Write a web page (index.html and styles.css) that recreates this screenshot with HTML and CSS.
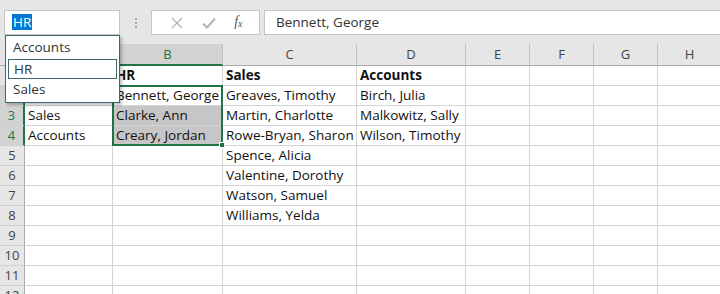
FILE: index.html
```html
<!DOCTYPE html>
<html>
<head>
<meta charset="utf-8">
<link rel="stylesheet" href="styles.css">
</head>
<body>
<div class="app">
  <div class="toolbar">
    <div class="namebox"><span class="namesel">HR</span></div>
    <div class="grip"><i></i><i></i><i></i></div>
    <div class="fxbox">
      <svg class="ico" width="14" height="14" viewBox="0 0 14 14"><path d="M2 2 L12 12 M12 2 L2 12" stroke="#b4b4b4" stroke-width="1.4" fill="none"/></svg>
      <svg class="ico" width="16" height="14" viewBox="0 0 16 14"><path d="M2 7.5 L6 11.5 L14 2.5" stroke="#b4b4b4" stroke-width="2" fill="none"/></svg>
      <span class="fx">f<sub>x</sub></span>
    </div>
    <div class="formula">Bennett, George</div>
  </div>

  <div class="sheet">
    <div class="corner"></div>
    <div class="ch">A</div><div class="ch sel">B</div><div class="ch">C</div><div class="ch">D</div><div class="ch">E</div><div class="ch">F</div><div class="ch">G</div><div class="ch">H</div>

    <div class="rh">1</div><div class="c"></div><div class="c b">HR</div><div class="c b">Sales</div><div class="c b">Accounts</div><div class="c"></div><div class="c"></div><div class="c"></div><div class="c"></div>
    <div class="rh sel">2</div><div class="c"></div><div class="c active">Bennett, George<div class="selection"><span class="handle"></span></div></div><div class="c">Greaves, Timothy</div><div class="c">Birch, Julia</div><div class="c"></div><div class="c"></div><div class="c"></div><div class="c"></div>
    <div class="rh sel">3</div><div class="c">Sales</div><div class="c hl">Clarke, Ann</div><div class="c">Martin, Charlotte</div><div class="c">Malkowitz, Sally</div><div class="c"></div><div class="c"></div><div class="c"></div><div class="c"></div>
    <div class="rh sel">4</div><div class="c">Accounts</div><div class="c hl">Creary, Jordan</div><div class="c">Rowe-Bryan, Sharon</div><div class="c">Wilson, Timothy</div><div class="c"></div><div class="c"></div><div class="c"></div><div class="c"></div>
    <div class="rh">5</div><div class="c"></div><div class="c"></div><div class="c">Spence, Alicia</div><div class="c"></div><div class="c"></div><div class="c"></div><div class="c"></div><div class="c"></div>
    <div class="rh">6</div><div class="c"></div><div class="c"></div><div class="c">Valentine, Dorothy</div><div class="c"></div><div class="c"></div><div class="c"></div><div class="c"></div><div class="c"></div>
    <div class="rh">7</div><div class="c"></div><div class="c"></div><div class="c">Watson, Samuel</div><div class="c"></div><div class="c"></div><div class="c"></div><div class="c"></div><div class="c"></div>
    <div class="rh">8</div><div class="c"></div><div class="c"></div><div class="c">Williams, Yelda</div><div class="c"></div><div class="c"></div><div class="c"></div><div class="c"></div><div class="c"></div>
    <div class="rh">9</div><div class="c"></div><div class="c"></div><div class="c"></div><div class="c"></div><div class="c"></div><div class="c"></div><div class="c"></div><div class="c"></div>
    <div class="rh">10</div><div class="c"></div><div class="c"></div><div class="c"></div><div class="c"></div><div class="c"></div><div class="c"></div><div class="c"></div><div class="c"></div>
    <div class="rh">11</div><div class="c"></div><div class="c"></div><div class="c"></div><div class="c"></div><div class="c"></div><div class="c"></div><div class="c"></div><div class="c"></div>
    <div class="rh">12</div><div class="c"></div><div class="c"></div><div class="c"></div><div class="c"></div><div class="c"></div><div class="c"></div><div class="c"></div><div class="c"></div>
  </div>

  <div class="dropdown">
    <div class="opt">Accounts</div>
    <div class="opt cur">HR</div>
    <div class="opt">Sales</div>
  </div>
</div>
</body>
</html>
```

FILE: styles.css
```css
* { box-sizing: border-box; }
html, body { margin: 0; padding: 0; }
body {
  width: 720px;
  height: 294px;
  overflow: hidden;
  background: #ffffff;
  font-family: "Open Sans", "Noto Sans", sans-serif;
  font-size: 13.5px;
  color: #1a1a1a;
}
.app { position: relative; width: 720px; height: 294px; overflow: hidden; }

.toolbar {
  height: 44px;
  background: #e6e6e6;
  display: flex;
  align-items: flex-start;
  padding-top: 10px;
}
.namebox {
  margin-left: 4px;
  width: 116px;
  height: 25px;
  background: #fff;
  border: 1px solid #c6c6c6;
  padding: 3px 0 0 7px;
  line-height: 16px;
}
.namesel { background: #0078d7; color: #fff; padding: 0 1px; display: inline-block; }
.grip {
  width: 31px;
  height: 25px;
  display: flex;
  flex-direction: column;
  align-items: center;
  justify-content: center;
  gap: 2px;
}
.grip i { display: block; width: 2px; height: 2px; background: #a6a6a6; }
.fxbox {
  width: 109px;
  height: 25px;
  background: #fff;
  border: 1px solid #c6c6c6;
  display: flex;
  align-items: center;
  justify-content: space-around;
  padding: 0 8px 0 10px;
}
.fx {
  font-family: "Liberation Serif", serif;
  font-style: italic;
  font-size: 14px;
  color: #555;
  line-height: 14px;
}
.fx sub { font-size: 10px; vertical-align: -1px; }
.formula {
  margin-left: 4px;
  flex: 1;
  height: 25px;
  background: #fff;
  border: 1px solid #c6c6c6;
  border-right: none;
  padding: 3px 0 0 11px;
  line-height: 16px;
  color: #333;
}

.sheet {
  display: grid;
  grid-template-columns: 25px 88px 110px 134px 109px 64px 64px 64px 64px;
  grid-template-rows: 22px repeat(12, 20px);
}
.corner, .ch {
  background: #e6e6e6;
  border-bottom: 1px solid #ababab;
  border-right: 1px solid #c0c0c0;
}
.ch {
  text-align: center;
  color: #444;
  line-height: 21px;
  font-size: 13px;
}
.ch.sel {
  background: #d2d2d2;
  color: #217346;
  border-bottom: 2px solid #217346;
}
.rh {
  background: #e6e6e6;
  border-right: 1px solid #ababab;
  border-bottom: 1px solid #d0d0d0;
  text-align: center;
  color: #444;
  line-height: 19px;
  font-size: 13px;
}
.rh.sel {
  background: #d2d2d2;
  color: #217346;
  border-right: 2px solid #217346;
}
.c {
  border-right: 1px solid #d4d4d4;
  border-bottom: 1px solid #d4d4d4;
  padding-left: 3px;
  line-height: 19px;
  white-space: nowrap;
  color: #111;
}
.c.b { font-weight: 700; }
.c.hl { background: #c6c6c6; }
.c.active { position: relative; }

.selection {
  position: absolute;
  left: -1px;
  top: -1px;
  width: 111px;
  height: 61px;
  border: 2px solid #217346;
  pointer-events: none;
}
.handle {
  position: absolute;
  right: -4px;
  bottom: -4px;
  width: 6px;
  height: 6px;
  background: #217346;
  border: 1px solid #fff;
}

.dropdown {
  position: absolute;
  left: 5px;
  top: 35px;
  width: 115px;
  height: 68px;
  background: #fff;
  border: 1px solid #3d6a70;
  box-shadow: 2px 2px 3px rgba(0,0,0,0.25);
  padding: 1px 1px;
}
.opt {
  height: 22px;
  line-height: 20px;
  padding-left: 6px;
  color: #333;
}
.opt.cur {
  border: 1px solid #3d6a70;
  height: 20px;
  line-height: 18px;
  padding-left: 5px;
  margin: 0 1px 0 1px;
}
```
